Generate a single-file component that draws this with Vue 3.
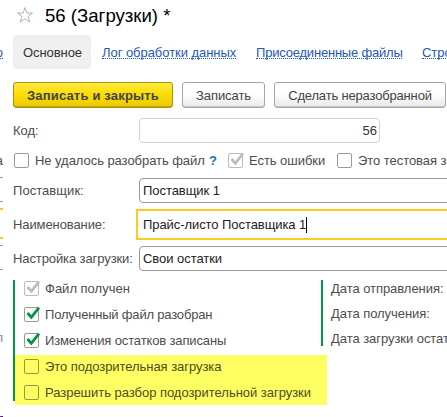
<script setup>
const tabs = [
  { text: 'Лог обработки данных', cls: 'log' },
  { text: 'Присоединенные файлы', cls: 'files' },
  { text: 'Строки загрузки', cls: 'lines' },
]
const flags = [
  { text: 'Файл получен', off: true, cls: 'f1' },
  { text: 'Полученный файл разобран', cls: 'f2' },
  { text: 'Изменения остатков записаны', cls: 'f3' },
]
const suspicious = [
  { text: 'Это подозрительная загрузка', cls: 'f4' },
  { text: 'Разрешить разбор подозрительной загрузки', cls: 'f5' },
]
</script>

<template>
  <div class="screen">
    <div class="behind">
      <span class="bit blue">о</span>
      <span class="bit word">а</span>
      <i class="edge e1"></i><i class="edge e2"></i>
      <i class="edge gold e3"></i><i class="edge gold e4"></i>
      <i class="edge e5"></i><i class="edge e6"></i>
      <span class="bit tail">п</span>
      <i class="speck"></i>
    </div>
    <main class="form">
      <header class="title">
        <svg class="star" width="18" height="18" viewBox="0 0 18 18">
          <path d="M9 1.6 L10.9 7 H16.6 L12 10.4 L13.8 16 L9 12.6 L4.2 16 L6 10.4 L1.4 7 H7.1 Z" fill="#fff" stroke="#aeb2b8" stroke-width="1" />
        </svg>
        <h1>56 (Загрузки) *</h1>
      </header>
      <nav class="tabs">
        <span class="tab">Основное</span>
        <a v-for="t in tabs" :key="t.text" :class="t.cls">{{ t.text }}</a>
      </nav>
      <div class="buttons">
        <button class="primary">Записать и закрыть</button>
        <button class="save">Записать</button>
        <button class="undo">Сделать неразобранной</button>
      </div>
      <div class="row code"><label>Код:</label><div class="field readonly"><span>56</span></div></div>
      <div class="checks">
        <span class="box"></span><span class="c1">Не удалось разобрать файл</span><b>?</b>
        <span class="box off"><svg width="17" height="17" viewBox="0 0 17 17"><path d="M3.5 7 L7.3 11.3 L15 1.6" /></svg></span><span class="c2">Есть ошибки</span>
        <span class="box"></span><span class="c3">Это тестовая загрузка</span>
      </div>
      <div class="row"><label class="l1">Поставщик:</label><div class="field"><span class="v1">Поставщик 1</span></div></div>
      <div class="row focus"><label class="l2">Наименование:</label><div class="field"><span class="v2">Прайс-листо Поставщика 1</span><i class="caret"></i></div></div>
      <div class="row"><label class="l3">Настройка загрузки:</label><div class="field"><span class="v3">Свои остатки</span></div></div>
      <div class="groups">
        <section class="left">
          <div v-for="f in flags" :key="f.text" class="flag">
            <span class="box" :class="{ off: f.off }"><svg width="17" height="17" viewBox="0 0 17 17"><path d="M3.5 7 L7.3 11.3 L15 1.6" /></svg></span>
            <span :class="f.cls">{{ f.text }}</span>
          </div>
          <div class="marked">
            <div v-for="f in suspicious" :key="f.text" class="flag">
              <span class="box"></span><span :class="f.cls">{{ f.text }}</span>
            </div>
          </div>
        </section>
        <section class="dates">
          <span class="d1">Дата отправления:</span>
          <span class="d2">Дата получения:</span>
          <span class="d3">Дата загрузки остатков:</span>
        </section>
      </div>
    </main>
  </div>
</template>

<style>
body { background: #fff; overflow: hidden; }
</style>

<style scoped>
* { box-sizing: border-box; }
.screen {
  display: flex; width: 447px; height: 417px; overflow: hidden; background: #fff;
  font: 13px/16px "Liberation Sans", Arial, sans-serif; color: #4d4d4d; white-space: nowrap;
  letter-spacing: -0.05px;
}
.behind { position: relative; flex: 0 0 3px; overflow: hidden; }
.bit { position: absolute; right: 0; }
.blue { top: 45px; color: #2458b8; border-bottom: 1px dotted #2458b8; height: 14px; }
.word { top: 153px; }
.tail { top: 330px; color: #7b8bb0; }
.edge { position: absolute; left: 0; width: 3px; height: 1px; background: #999; }
.gold { height: 2px; background: #f9cc1f; }
.e1 { top: 177px; } .e2 { top: 201px; } .e3 { top: 208px; } .e4 { top: 237px; } .e5 { top: 245px; } .e6 { top: 269px; }
.speck { position: absolute; left: 0; top: 416px; width: 3px; height: 1px; background: linear-gradient(90deg, #d22 50%, #22c 50%); }
.form { flex: 1; min-width: 0; padding-left: 10px; overflow: hidden; }
.title { display: flex; height: 35px; padding: 6px 0 0 3px; }
.star { flex: none; }
h1 { margin: -2px 0 0 11px; font-size: 18.6px; line-height: 24px; font-weight: 400; color: #000; letter-spacing: 0; }
.tabs { display: flex; align-items: center; height: 34px; gap: 20px; color: #2458b8; }
.tab { flex: none; width: 78px; height: 34px; padding: 10px 0 0 10px; margin-right: -9px; background: #f0f0f0; border-radius: 4px; color: #333; letter-spacing: -0.08px; }
.tabs a { flex: none; height: 14px; line-height: 15px; border-bottom: 1px dotted #2458b8; }
.log { width: 134px; } .files { width: 146px; letter-spacing: -0.2px; }
.buttons { display: flex; gap: 9px; margin-top: 13px; height: 26px; }
button {
  flex: none; height: 26px; padding: 2px 0 0; font: inherit; letter-spacing: inherit; color: #444;
  border: 1px solid #a6a6a6; border-radius: 3px; background: linear-gradient(#fff 45%, #e8e8e8);
  box-shadow: inset 0 -1px 0 #c8c8c8;
}
.primary { width: 160px; font-weight: 700; letter-spacing: 0.18px; border-color: #a8920c; background: linear-gradient(#ffea3a, #fbdc08 50%, #e9c900); box-shadow: inset 0 -1px 0 #c2a800; }
.save { width: 83px; }
.undo { width: 172px; letter-spacing: -0.17px; }
.row { display: flex; align-items: center; height: 25px; margin-top: 10px; }
.row label { flex: none; width: 126px; padding-top: 1px; }
.row .l1 { letter-spacing: 0.05px; }
.row .l2 { letter-spacing: -0.1px; padding-top: 0; }
.row .l3 { letter-spacing: -0.1px; }
.field { flex: none; width: 320px; height: 25px; padding: 4px 0 0 3px; border: 1px solid #999; border-radius: 4px; color: #222; }
.readonly { width: 241px; padding-right: 2px; border-color: #d2d2d2; text-align: right; letter-spacing: 0; color: #333; }
.checks { display: flex; align-items: center; height: 15px; margin-top: 10px; padding-left: 1px; }
.checks > * { flex: none; }
.box { position: relative; flex: none; width: 15px; height: 15px; border: 1px solid #999; border-radius: 2px; margin-right: 6px; }
.box svg { position: absolute; left: -1px; top: -2px; overflow: visible; }
.box path { fill: none; stroke: #009646; stroke-width: 2.8; }
.box.off { border-color: #bbb; }
.box.off path { stroke: #bdbdbd; }
.c1, .c2, .c3, .checks b { padding-top: 1px; }
.c1 { width: 174px; } .c2 { width: 88px; }
.checks b { width: 19px; color: #1673b8; }
.focus { height: 31px; margin: 6px 0; }
.focus + .row { margin-top: 6px; }
.focus label { width: 123px; }
.focus .field { height: 31px; border: 2px solid #f9cc1f; border-radius: 0; padding: 6px 0 0 5px; display: flex; }
.v2 { letter-spacing: -0.07px; }
.caret { width: 1px; height: 16px; background: #000; }
.groups { display: flex; justify-content: flex-start; align-items: flex-start; margin-top: 9px; }
.left { width: 314px; height: 121px; flex: none; border-left: 2px solid #009646; }
.left > .flag:first-child { margin-top: 1px; }
.flag { display: flex; height: 26px; padding-left: 9px; }
.f1 { letter-spacing: 0; }
.f2 { letter-spacing: -0.19px; }
.f3 { letter-spacing: -0.13px; }
.f5 { letter-spacing: -0.03px; }
.marked { width: 312px; height: 50px; margin-top: -4px; padding-top: 4px; background: #ffff64; color: #4d4d1e; }
.marked .box { border-color: #99993c; }
.dates { flex: none; height: 66px; margin-left: -6px; padding-left: 8px; border-left: 2px solid #009646; display: flex; flex-direction: column; line-height: 25px; }
.dates .d1 { margin-top: -4px; }
</style>
